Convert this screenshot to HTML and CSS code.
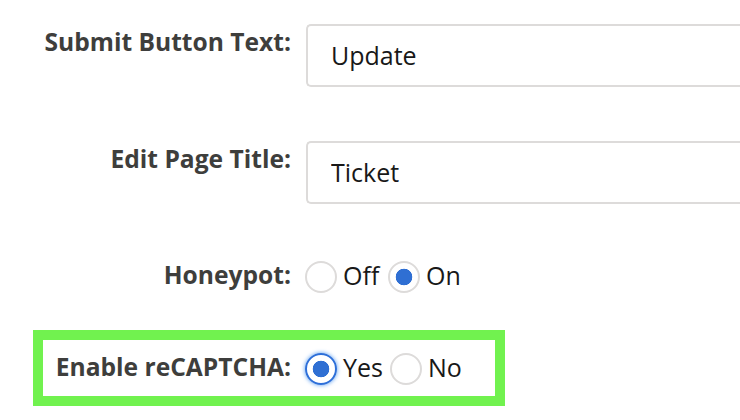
FILE: index.html
```html
<!DOCTYPE html>
<html lang="en">
<head>
<meta charset="utf-8">
<title>Form settings</title>
<link rel="stylesheet" href="styles.css">
</head>
<body>
<form class="settings">
  <div class="row row-input">
    <label class="field-label" for="submit-text">Submit Button Text:</label>
    <input class="text-input" id="submit-text" type="text" value="Update">
  </div>
  <div class="row row-input row-second">
    <label class="field-label" for="page-title">Edit Page Title:</label>
    <input class="text-input" id="page-title" type="text" value="Ticket">
  </div>
  <div class="row row-radio row-honeypot">
    <span class="field-label">Honeypot:</span>
    <div class="radio-group">
      <label class="option"><input class="radio" type="radio" name="honeypot"><span class="option-text opt-off">Off</span></label>
      <label class="option"><input class="radio" type="radio" name="honeypot" checked><span class="option-text">On</span></label>
    </div>
  </div>
  <div class="highlight">
    <span class="field-label">Enable reCAPTCHA:</span>
    <div class="radio-group">
      <label class="option"><input class="radio radio-focus" type="radio" name="recaptcha" checked><span class="option-text opt-yes">Yes</span></label>
      <label class="option"><input class="radio" type="radio" name="recaptcha"><span class="option-text">No</span></label>
    </div>
  </div>
</form>
</body>
</html>
```

FILE: styles.css
```css
html, body {
  margin: 0;
  padding: 0;
  background: #ffffff;
  overflow: hidden;
}

body {
  width: 740px;
  height: 420px;
  font-family: "Open Sans", "Liberation Sans", sans-serif;
  font-size: 25px;
  color: #080707;
}

.settings {
  display: flex;
  flex-direction: column;
  align-items: flex-start;
  padding-top: 24px;
}

.row {
  display: flex;
  align-items: flex-start;
  width: 100%;
}

.field-label {
  flex: 0 0 291px;
  text-align: right;
  font-size: 24.6px;
  font-weight: 700;
  color: #3e3e3c;
  line-height: 32px;
  white-space: nowrap;
}

.row-input {
  column-gap: 15px;
}

.row-input .field-label {
  margin-top: 2px;
}

.row-second {
  margin-top: 54px;
}

.text-input {
  flex: 0 0 434px;
  height: 63px;
  box-sizing: border-box;
  border: 2px solid #dddbda;
  border-right-width: 0;
  border-radius: 5px 0 0 5px;
  padding: 13px 23px 14px;
  font-family: inherit;
  font-size: 25px;
  line-height: 32px;
  color: #181818;
  background: #ffffff;
  outline: none;
}

.row-radio {
  column-gap: 14px;
}

.row-honeypot {
  margin-top: 57px;
}

.row-radio .field-label,
.highlight .field-label {
  margin-top: -2px;
}

.radio-group {
  display: flex;
  align-items: flex-start;
  column-gap: 7px;
}

.option {
  display: flex;
  align-items: flex-start;
  column-gap: 6px;
}

.option-text {
  line-height: 32px;
  margin-top: -2px;
  color: #181818;
}

.opt-off {
  min-width: 38px;
}

.opt-yes {
  min-width: 39px;
}

.radio {
  appearance: none;
  -webkit-appearance: none;
  margin: 0;
  width: 32px;
  height: 32px;
  box-sizing: border-box;
  border: 2px solid #dddbda;
  border-radius: 50%;
  background: #ffffff;
}

.radio:checked {
  background: radial-gradient(circle, #2f6fd3 0 8px, #ffffff 8.6px);
}

.radio-focus {
  border-color: #2d6fd9;
  box-shadow: 0 0 4px rgba(21, 117, 235, 0.75);
}

.highlight {
  display: flex;
  align-items: flex-start;
  column-gap: 14px;
  box-sizing: border-box;
  width: 472px;
  margin: 37px 0 0 33px;
  border: 10px solid #71f24f;
  padding: 13px 0 11px;
}

.highlight .field-label {
  flex-basis: 248px;
}
```
